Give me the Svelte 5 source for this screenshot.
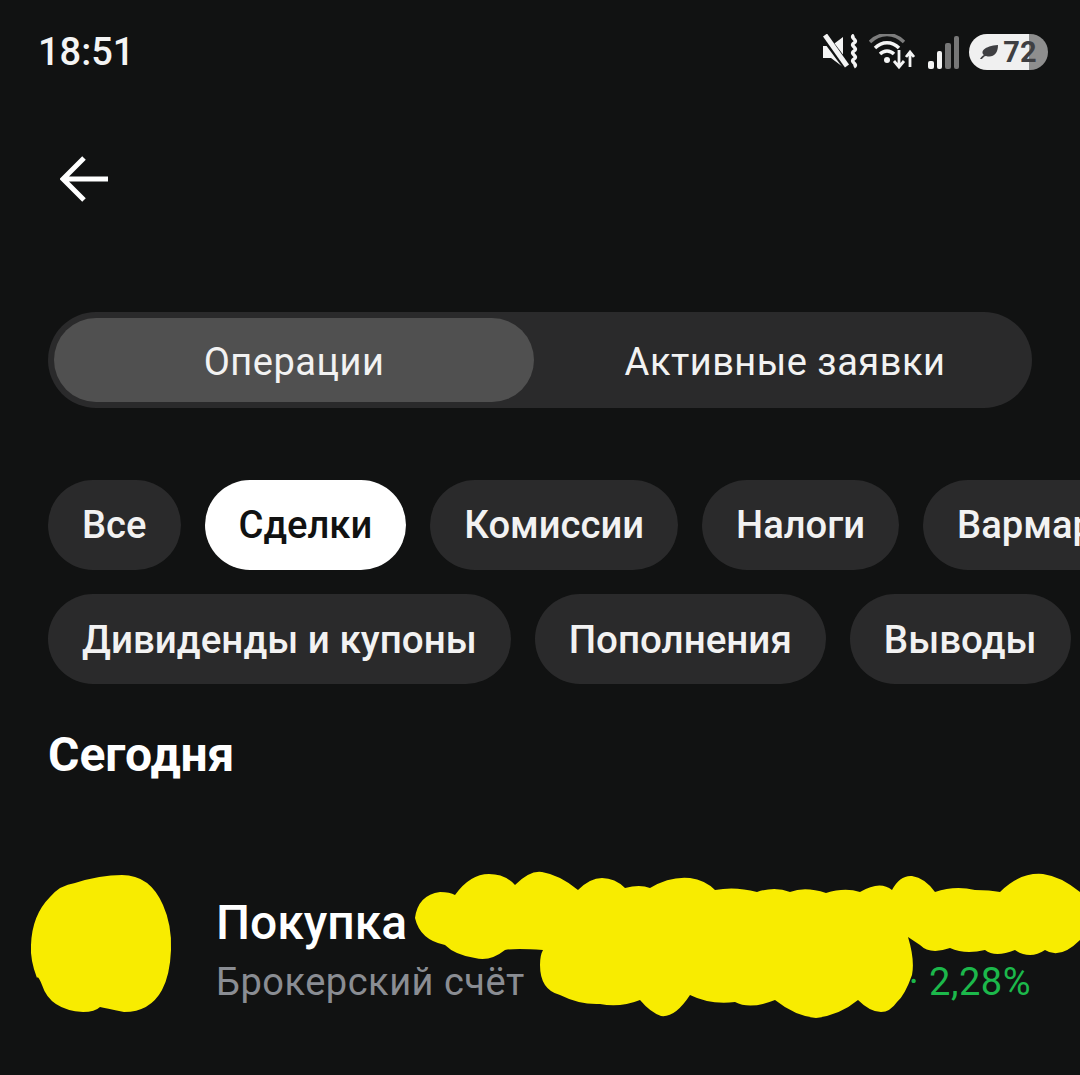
<script>
  const filters = [
    [
      { label: 'Все' },
      { label: 'Сделки', active: true },
      { label: 'Комиссии' },
      { label: 'Налоги' },
      { label: 'Вармаржа' }
    ],
    [
      { label: 'Дивиденды и купоны' },
      { label: 'Пополнения' },
      { label: 'Выводы' }
    ]
  ]
</script>

<div class="page">
  <div class="status">
    <span class="time">18:51</span>
    <div class="status-icons">
      <svg width="36" height="36" viewBox="0 0 36 36">
        <path d="M0 12h8L20 3v30L8 24H0z" fill="#f4f4f4" />
        <path d="M1 2l24 32" stroke="#111212" stroke-width="8" />
        <path d="M2 1l22 31" stroke="#f4f4f4" stroke-width="5" />
        <path d="M31 1c-5 3 5 5 0 8s5 5 0 8 5 5 0 8 5 5 0 8" fill="none" stroke="#f4f4f4" stroke-width="3.4" />
      </svg>
      <svg width="46" height="36" viewBox="0 0 46 36">
        <path d="M1 8C11-2 25-2 35 8" fill="none" stroke="#7c7c7c" stroke-width="3.4" />
        <path d="M6 14c7-7 17-7 24 0" fill="none" stroke="#f4f4f4" stroke-width="3.4" />
        <path d="M11 20c4-4 10-4 14 0" fill="none" stroke="#f4f4f4" stroke-width="3.4" />
        <circle cx="18" cy="26" r="3" fill="#f4f4f4" />
        <path d="M30 16v17m-5-6l5 6 5-6M41 33V18m-4 5l4-5 4 5" fill="none" stroke="#f4f4f4" stroke-width="2.8" />
      </svg>
      <div class="signal">
        <i class="on" style="height:8px"></i>
        <i class="on" style="height:18px"></i>
        <i style="height:26px"></i>
        <i style="height:33px"></i>
      </div>
      <div class="battery">
        <svg width="22" height="16" viewBox="0 0 22 16">
          <path d="M2 15c1-2 2-3 4-4C2 8 6 2 20 1c0 9-5 13-12 11-2 0-3 2-4 3z" fill="#3f3f42" />
        </svg>
        <span>72</span>
      </div>
    </div>
  </div>

  <div class="back">
    <svg width="50" height="50" viewBox="0 0 50 50">
      <path d="M48 25H4M24 4L3 25l21 21" fill="none" stroke="#fff" stroke-width="5" />
    </svg>
  </div>

  <div class="tabs">
    <div class="tab selected">Операции</div>
    <div class="tab">Активные заявки</div>
  </div>

  <div class="filters">
    {#each filters as row}
      <div class="chip-row">
        {#each row as chip}
          <div class="chip" class:active={chip.active}>{chip.label}</div>
        {/each}
      </div>
    {/each}
  </div>

  <h2>Сегодня</h2>

  <div class="operation">
    <div class="avatar"></div>
    <div class="info">
      <div class="title">Покупка</div>
      <div class="sub">
        <span>Брокерский счёт</span>
        <span class="percent">· 2,28%</span>
      </div>
    </div>
  </div>

  <!-- yellow marker over the private bits -->
  <svg class="marker" width="1080" height="1075" viewBox="0 0 1080 1075">
    <g fill="#f8ec00">
      <path d="M122 875Q150 875 163 905Q172 925 171 950Q170 975 162 990Q150 1012 124 1012Q105 1008 100 1007Q95 1012 83 1012Q50 1010 42 985Q38 975 37 978Q30 960 31 945Q32 915 50 897Q60 885 75 883Q100 875 122 875z" />
      <path d="M415 918Q418 895 440 892Q450 892 455 895Q470 874 489 874Q505 874 515 885Q530 870 542 872Q560 875 578 890Q590 878 602 878Q615 878 625 888Q640 884 650 888Q670 876 690 878Q705 880 715 890Q735 886 757 892Q775 886 790 892Q805 886 826 893Q845 887 860 892Q880 880 892 890Q900 875 912 876Q925 878 935 892Q955 885 975 890Q990 890 1000 892Q1020 872 1043 874Q1060 876 1080 892V940Q1060 960 1045 950Q1030 960 1015 950Q995 958 985 950Q965 955 950 948Q930 955 920 945L908 937Q915 960 912 975Q905 995 897 1002Q890 1012 881 1012Q870 1012 858 1000Q840 1015 816 1018Q795 1016 775 1000Q750 1010 735 1002Q710 1005 690 995Q675 1018 661 1016Q650 1012 640 1000Q620 1008 600 1004Q580 1005 560 995Q540 990 540 965Q540 955 543 950Q515 948 505 950Q490 962 475 958Q455 955 445 945Q420 940 415 918z" />
    </g>
  </svg>
</div>

<style>
  :global(body) {
    margin: 0;
    background: #111212;
  }

  .page {
    position: relative;
    width: 1080px;
    height: 1075px;
    overflow: hidden;
    background: #111212;
    color: #fff;
    font-family: Roboto, "Noto Sans", sans-serif;
  }

  .status {
    display: flex;
    justify-content: space-between;
    align-items: center;
    height: 34px;
    padding: 35px 32px 0 38px;
  }

  .time {
    font-size: 38px;
    font-weight: 500;
    color: #f4f4f4;
  }

  .status-icons {
    display: flex;
    align-items: center;
    gap: 10px;
  }

  .signal {
    display: flex;
    align-items: flex-end;
    gap: 3px;
    height: 33px;
    margin-left: 3px;
  }

  .signal i {
    display: block;
    width: 5.5px;
    border-radius: 2px;
    background: #777;
  }

  .signal i.on {
    background: #f4f4f4;
  }

  .battery {
    display: flex;
    align-items: center;
    justify-content: center;
    gap: 3px;
    box-sizing: border-box;
    width: 79px;
    height: 36px;
    padding-right: 2px;
    border-radius: 18px;
    background: linear-gradient(90deg, #f0f0f0 76%, #8e8e8e 76%);
    color: #3f3f42;
    font-size: 29px;
    font-weight: 700;
  }

  .back {
    display: flex;
    padding: 85px 0 0 60px;
  }

  .tabs {
    display: flex;
    box-sizing: border-box;
    width: 984px;
    height: 96px;
    margin: 108px 0 0 48px;
    padding: 6px;
    border-radius: 48px;
    background: #2a2a2b;
  }

  .tab {
    display: flex;
    flex: 1;
    align-items: center;
    justify-content: center;
    padding: 3px 0 0 10px;
    border-radius: 42px;
    color: #f2f2f2;
    font-size: 38px;
    letter-spacing: 0.5px;
  }

  .tab.selected {
    flex: none;
    width: 480px;
    padding-left: 0;
    background: #505050;
  }

  .filters {
    display: flex;
    flex-direction: column;
    gap: 24px;
    margin: 72px 0 0 48px;
  }

  .chip-row {
    display: flex;
    gap: 24px;
    font-size: 38.6px;
  }

  .chip-row:first-child {
    font-size: 38.2px;
  }

  .chip {
    display: flex;
    flex: none;
    align-items: center;
    height: 90px;
    padding: 0 34px;
    border-radius: 45px;
    background: #2a2a2b;
    color: #f2f2f2;
    font-weight: 500;
    white-space: nowrap;
  }

  .chip.active {
    background: #fff;
    color: #111212;
  }

  h2 {
    margin: 44px 0 0 48px;
    font-size: 48px;
    line-height: 54px;
    font-weight: 700;
  }

  .operation {
    display: flex;
    gap: 44px;
    margin: 113px 0 0 32px;
  }

  .avatar {
    width: 140px;
    height: 110px;
  }

  .info {
    min-width: 0;
    flex: 1;
  }

  .title {
    font-size: 48px;
    line-height: 56px;
    font-weight: 500;
  }

  .sub {
    display: flex;
    justify-content: space-between;
    margin-top: 9px;
    padding-right: 49px;
    color: #8a8d93;
    font-size: 38px;
    line-height: 44px;
    letter-spacing: 0.5px;
  }

  .percent {
    color: #1cb84b;
  }

  .marker {
    position: absolute;
    top: 0;
    left: 0;
    pointer-events: none;
  }
</style>
